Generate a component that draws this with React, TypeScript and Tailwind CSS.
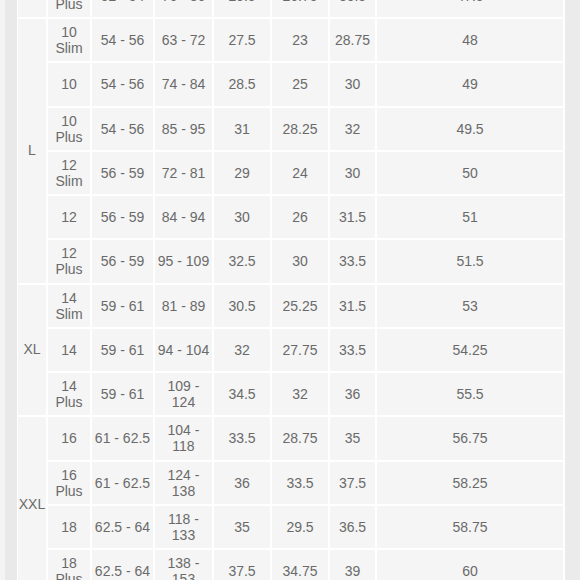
import React from "react";

type Row = [string, string, string, string, string, string, string];

const groups: { label: string; rows: Row[] }[] = [
  {
    label: "",
    rows: [["8\nPlus", "52 - 54", "76 - 86", "29.5", "26.75", "30.5", "47.5"]],
  },
  {
    label: "L",
    rows: [
      ["10\nSlim", "54 - 56", "63 - 72", "27.5", "23", "28.75", "48"],
      ["10", "54 - 56", "74 - 84", "28.5", "25", "30", "49"],
      ["10\nPlus", "54 - 56", "85 - 95", "31", "28.25", "32", "49.5"],
      ["12\nSlim", "56 - 59", "72 - 81", "29", "24", "30", "50"],
      ["12", "56 - 59", "84 - 94", "30", "26", "31.5", "51"],
      ["12\nPlus", "56 - 59", "95 - 109", "32.5", "30", "33.5", "51.5"],
    ],
  },
  {
    label: "XL",
    rows: [
      ["14\nSlim", "59 - 61", "81 - 89", "30.5", "25.25", "31.5", "53"],
      ["14", "59 - 61", "94 - 104", "32", "27.75", "33.5", "54.25"],
      ["14\nPlus", "59 - 61", "109 -\n124", "34.5", "32", "36", "55.5"],
    ],
  },
  {
    label: "XXL",
    rows: [
      ["16", "61 - 62.5", "104 -\n118", "33.5", "28.75", "35", "56.75"],
      ["16\nPlus", "61 - 62.5", "124 -\n138", "36", "33.5", "37.5", "58.25"],
      ["18", "62.5 - 64", "118 -\n133", "35", "29.5", "36.5", "58.75"],
      ["18\nPlus", "62.5 - 64", "138 -\n153", "37.5", "34.75", "39", "60"],
    ],
  },
];

const spanClass: Record<number, string> = {
  1: "row-span-1",
  3: "row-span-3",
  4: "row-span-4",
  6: "row-span-6",
};

function Cell({ text }: { text: string }) {
  return (
    <div className="bg-[#f5f5f5] flex items-center justify-center text-center whitespace-pre leading-[16px]">
      {text}
    </div>
  );
}

export default function App() {
  return (
    <div
      className="flex h-[580px] w-[580px] overflow-hidden bg-white text-[14px] text-[#6a6a6a]"
      style={{ fontFamily: '"Liberation Sans", Arial, sans-serif' }}
    >
      <div className="w-[5px] shrink-0 bg-[#f4f4f4]" />
      <div className="w-[12px] shrink-0 bg-[#e9e9e9]" />
      <div className="w-[548px] shrink-0 bg-white pl-[1px] pr-[2px]">
        <div className="mt-[-25.25px] grid grid-cols-[28px_42px_61px_57px_56px_56px_45px_186px] auto-rows-[42.25px] gap-[2px]">
          {groups.map((g, gi) => (
            <React.Fragment key={gi}>
              <div
                className={`${spanClass[g.rows.length]} bg-[#f5f5f5] flex items-center justify-center`}
              >
                {g.label}
              </div>
              {g.rows.map((r, ri) =>
                r.map((c, ci) => <Cell key={`${gi}-${ri}-${ci}`} text={c} />)
              )}
            </React.Fragment>
          ))}
        </div>
      </div>
      <div className="flex-1 bg-[#ebebeb]" />
    </div>
  );
}
